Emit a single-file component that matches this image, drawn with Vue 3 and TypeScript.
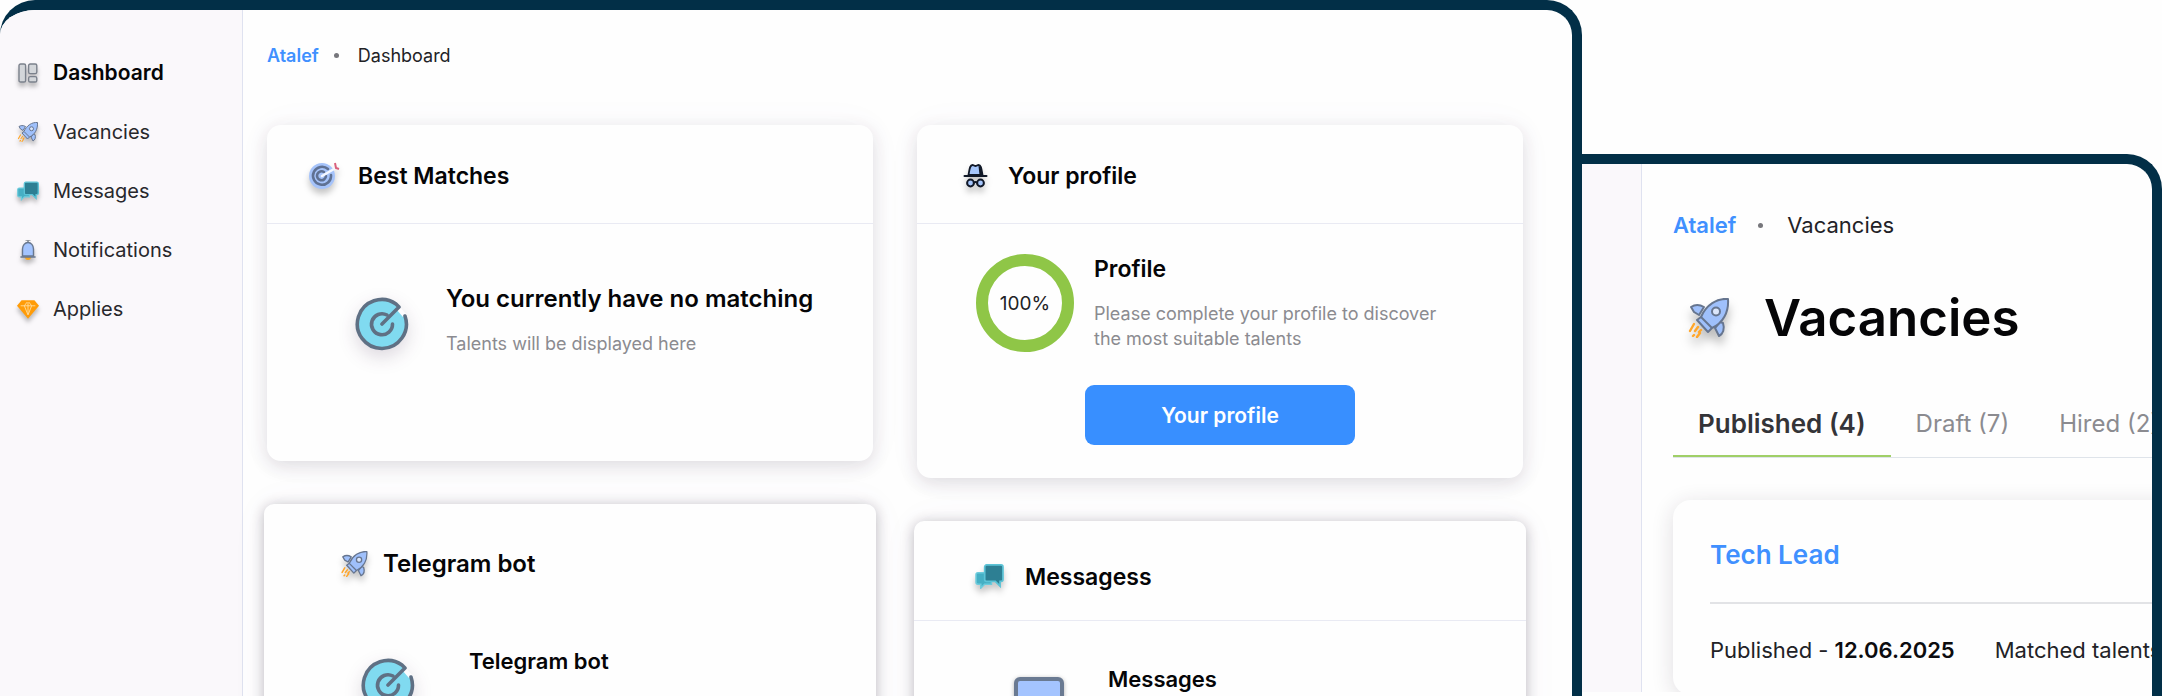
<script setup lang="ts">
interface NavItem {
  label: string
  icon: string
  active?: boolean
}

interface Tab {
  label: string
  active?: boolean
}

const navItems: NavItem[] = [
  { label: 'Dashboard', icon: 'grid', active: true },
  { label: 'Vacancies', icon: 'rocket' },
  { label: 'Messages', icon: 'chat' },
  { label: 'Notifications', icon: 'bell' },
  { label: 'Applies', icon: 'gem' },
]

const tabs: Tab[] = [
  { label: 'Published (4)', active: true },
  { label: 'Draft (7)' },
  { label: 'Hired (2)' },
]

const profilePercent = 100
</script>

<template>
  <svg class="sprite" aria-hidden="true">
    <symbol id="icon-grid" viewBox="0 0 20 20">
      <g fill="#d3d6da" stroke="#7b818c" stroke-width="1.4">
        <rect x="1" y="1" width="6.6" height="18" rx="1.6" />
        <rect x="10.6" y="1" width="8.2" height="9.6" rx="1.6" />
        <rect x="10.6" y="13.6" width="8.2" height="5.4" rx="1.6" />
      </g>
    </symbol>
    <symbol id="icon-rocket" viewBox="0 0 40 40">
      <g fill="#9fc0fb" stroke="#66758f" stroke-width="2" stroke-linejoin="round">
        <path d="M15 9C10 6 5 7 2 9l3 5 5 3z" />
        <path d="M26 30l4 8c4-2 6-7 4-13l-3-1z" />
        <path d="M39 1C28 0 17 7 12 19l-4 3 11 12 4-4C34 25 40 14 39 1z" />
        <path d="M12 19l11 11" fill="none" />
        <circle cx="27" cy="13.5" r="4" fill="#dbe6fb" />
      </g>
      <g fill="none" stroke="#ffa62b" stroke-width="2.4" stroke-linecap="round">
        <path d="M5 26l-4 7M9 29l-3 4M12 32l-2 2M11 35l-3 4M5 37l-1 1" />
      </g>
    </symbol>
    <symbol id="icon-chat" viewBox="0 0 30 26">
      <path d="M3 9h14v12h-7l-4 4v-4H3a2 2 0 0 1-2-2v-8a2 2 0 0 1 2-2z" fill="#45afc4" stroke="#6ccbdc" stroke-width="1.6" />
      <path d="M12 1h15a2 2 0 0 1 2 2v13a2 2 0 0 1-2 2h-1v5l-5-5h-9a2 2 0 0 1-2-2V3a2 2 0 0 1 2-2z" fill="#2d7f93" stroke="#5cc3d6" stroke-width="1.8" />
    </symbol>
    <symbol id="icon-bell" viewBox="0 0 20 20">
      <path d="M7 17h6a3 3 0 0 1-6 0z" fill="#f5a524" />
      <path d="M10 0v3M7.500 0h5" stroke="#8b9098" stroke-width="1.6" fill="none" />
      <path d="M4.500 16V9a5.500 6.500 0 0 1 11 0v7z" fill="#a3c4ff" stroke="#68778f" stroke-width="1.4" />
      <path d="M3 17h14" stroke="#68778f" stroke-width="1.6" stroke-linecap="round" />
    </symbol>
    <symbol id="icon-gem" viewBox="0 0 24 21">
      <path d="M5 1h14l5 6-12 14L0 7z" fill="#ff9c08" />
      <path d="M4 7h16M8 7l4 10 4-10M8 7l3-4M16 7l-3-4M12 3v13" fill="none" stroke="#ffdc9c" stroke-width="1" />
    </symbol>
    <symbol id="icon-target" viewBox="0 0 33 30">
      <circle cx="13" cy="15" r="13" fill="#a5c3fa" />
      <g fill="none" stroke="#5f7193" stroke-width="2.6" stroke-linecap="round">
        <path d="M19 8a9 9 0 1 0 3 6" />
        <path d="M15 11a4.500 4.500 0 1 0 2 4" />
      </g>
      <path d="M13 15l12-7" stroke="#f4f7ff" stroke-width="2.6" stroke-linecap="round" />
      <path d="M26 2l1 5 3 1" fill="none" stroke="#d9607c" stroke-width="2" />
    </symbol>
    <symbol id="icon-hat" viewBox="0 0 24 24">
      <path d="M5 11C6 6 6 1 9 1c1 0 2 1 3 1s2-1 3-1c3 0 3 5 4 10z" fill="#a6c6fb" stroke="#111827" stroke-width="1.8" />
      <path d="M15 2c3 1 3 5 4 9h-3z" fill="#111827" />
      <path d="M1 12h22" stroke="#111827" stroke-width="2" stroke-linecap="round" />
      <g fill="#a6c6fb" stroke="#111827" stroke-width="2">
        <circle cx="7" cy="19" r="3.4" />
        <circle cx="17" cy="19" r="3.4" />
      </g>
      <path d="M10 19q2-2 4 0" fill="none" stroke="#111827" stroke-width="1.8" />
    </symbol>
    <symbol id="icon-goal" viewBox="0 0 60 60">
      <circle cx="30" cy="33" r="24" fill="#80daf0" />
      <path d="M47 15l8 9-4 2-7-8z" fill="#fdfcfe" />
      <g fill="none" stroke="#5f7084" stroke-width="3.6" stroke-linecap="round" stroke-linejoin="round">
        <path d="M53 25A24.500 24.500 0 1 1 44 13L47 16 30 33" />
        <path d="M35 24a10.500 10.500 0 1 0 5.500 9" />
      </g>
    </symbol>
    <symbol id="icon-monitor" viewBox="0 0 60 60">
      <rect x="7" y="9" width="46" height="42" rx="4" fill="#a4c4ff" stroke="#6a7a92" stroke-width="4" />
    </symbol>
  </svg>

  <div class="stage">
    <section class="window window-dashboard">
      <nav class="sidebar" aria-label="Main">
        <a
          v-for="item in navItems"
          :key="item.label"
          href="#"
          class="nav-link"
          :class="{ active: item.active }"
        >
          <svg class="nav-icon" aria-hidden="true"><use :href="`#icon-${item.icon}`" /></svg>
          <span>{{ item.label }}</span>
        </a>
      </nav>

      <main class="content">
        <div class="crumbs">
          <a href="#">Atalef</a>
          <i class="dot"></i>
          <span>Dashboard</span>
        </div>

        <div class="columns">
          <div class="column">
            <article class="card card-matches">
              <header class="card-head">
                <svg class="head-icon" aria-hidden="true"><use href="#icon-target" /></svg>
                <h2>Best Matches</h2>
              </header>
              <div class="card-body">
                <svg class="big-icon" aria-hidden="true"><use href="#icon-goal" /></svg>
                <div class="card-text">
                  <h3>You currently have no matching</h3>
                  <p>Talents will be displayed here</p>
                </div>
              </div>
            </article>

            <article class="card card-lower card-telegram">
              <header class="card-head">
                <svg class="head-icon" aria-hidden="true"><use href="#icon-rocket" /></svg>
                <h2>Telegram bot</h2>
              </header>
              <div class="card-body">
                <svg class="big-icon" aria-hidden="true"><use href="#icon-goal" /></svg>
                <div class="card-text"><h3>Telegram bot</h3></div>
              </div>
            </article>
          </div>

          <div class="column">
            <article class="card card-profile">
              <header class="card-head">
                <svg class="head-icon hat" aria-hidden="true"><use href="#icon-hat" /></svg>
                <h2>Your profile</h2>
              </header>
              <div class="card-body">
                <div class="ring">{{ profilePercent }}%</div>
                <div class="card-text">
                  <h3>Profile</h3>
                  <p>Please complete your profile to discover<br />the most suitable talents</p>
                </div>
              </div>
              <button type="button" class="primary">Your profile</button>
            </article>

            <article class="card card-lower card-messages">
              <header class="card-head">
                <svg class="head-icon" aria-hidden="true"><use href="#icon-chat" /></svg>
                <h2>Messagess</h2>
              </header>
              <div class="card-body">
                <svg class="big-icon crisp" aria-hidden="true"><use href="#icon-monitor" /></svg>
                <div class="card-text"><h3>Messages</h3></div>
              </div>
            </article>
          </div>
        </div>
      </main>
    </section>

    <section class="window window-vacancies">
      <div class="rail"></div>
      <div class="vacancies">
        <div class="crumbs large">
          <a href="#">Atalef</a>
          <i class="dot"></i>
          <span>Vacancies</span>
        </div>
        <div class="page-title">
          <svg aria-hidden="true"><use href="#icon-rocket" /></svg>
          <h1>Vacancies</h1>
        </div>
        <div class="tabs" role="tablist">
          <button
            v-for="tab in tabs"
            :key="tab.label"
            type="button"
            role="tab"
            :aria-selected="tab.active === true"
            class="tab"
            :class="{ active: tab.active }"
          >
            {{ tab.label }}
          </button>
        </div>
        <article class="job">
          <h2><a href="#">Tech Lead</a></h2>
          <div class="job-facts">
            <span>Published - <strong>12.06.2025</strong></span>
            <span>Matched talents</span>
          </div>
        </article>
      </div>
    </section>
  </div>
</template>

<style>
body {
  margin: 0;
  background: #fefefe;
}
</style>

<style scoped>
* {
  box-sizing: border-box;
}

.sprite {
  position: absolute;
  width: 0;
  height: 0;
}

h1,
h2,
h3,
p {
  margin: 0;
}

h1,
h2,
h3 {
  font-weight: 600;
  color: #050507;
}

a {
  text-decoration: none;
}

button {
  font-family: inherit;
  border: 0;
  cursor: pointer;
}

.stage {
  display: grid;
  grid-template-columns: minmax(0, 1582fr) minmax(0, 580fr);
  height: 100vh;
  overflow: hidden;
  font-family: Inter, "Liberation Sans", sans-serif;
  color: #222226;
  white-space: nowrap;
}

.window {
  display: flex;
  min-height: 0;
  overflow: hidden;
  border: 0 solid #022f47;
  border-width: 10px 10px 0 0;
  background: #fefefe;
}

.window-dashboard {
  border-radius: 35px 35px 0 0;
}

.sidebar {
  flex: 0 0 243px;
  padding: 33px 0 0 17px;
  border-right: 1px solid #dfe2f0;
  background: #faf8fb;
}

.nav-link {
  display: flex;
  align-items: center;
  gap: 14px;
  height: 59px;
  font-size: 20px;
  color: #28282c;
}

.nav-link.active {
  font-size: 21px;
  font-weight: 600;
  color: #050507;
}

.nav-icon {
  width: 22px;
  height: 20px;
  overflow: visible;
  filter: drop-shadow(0 4px 2px rgba(0, 0, 0, 0.25));
}

.content {
  flex: 1;
  min-width: 0;
  padding: 30px 49px 0 24px;
}

.crumbs {
  display: flex;
  align-items: center;
  height: 30px;
  font-size: 18px;
}

.crumbs a {
  font-weight: 600;
  color: #4090ff;
}

.dot {
  width: 5px;
  height: 5px;
  margin: 0 19px 0 15px;
  border-radius: 50%;
  background: #77777c;
}

.columns {
  display: flex;
  gap: 44px;
  margin-top: 55px;
}

.column {
  display: flex;
  flex: 1 1 0;
  flex-direction: column;
  gap: 43px;
  min-width: 0;
}

.card {
  border-radius: 14px;
  background: #fefefe;
  box-shadow: 0 5px 18px rgba(40, 30, 50, 0.14), 0 0 40px rgba(120, 80, 180, 0.03);
}

.card-head {
  display: flex;
  align-items: center;
  gap: 16px;
  height: 99px;
  padding: 4px 42px 0;
  border-bottom: 1px solid #e9eaf3;
}

.card-head h2,
.card-text h3 {
  font-size: 23px;
  line-height: 28px;
}

.head-icon {
  width: 33px;
  height: 30px;
  overflow: visible;
  filter: drop-shadow(0 5px 3px rgba(0, 0, 0, 0.22));
}

.head-icon.hat {
  height: 24px;
}

.card-body {
  display: flex;
  align-items: center;
}

.big-icon {
  flex: none;
  width: 60px;
  height: 60px;
  filter: drop-shadow(0 7px 9px rgba(50, 20, 60, 0.16));
}

.big-icon.crisp {
  filter: drop-shadow(0 1px 2px rgba(0, 0, 0, 0.3));
}

.card-text {
  min-height: 70px;
}

.card-text p {
  margin-top: 18px;
  font-size: 18px;
  line-height: 25px;
  color: #8b8b90;
}

.card-matches {
  min-height: 336px;
}

.card-matches .card-body {
  gap: 34px;
  padding: 61px 0 0 85px;
}

.card-matches .card-text h3 {
  font-size: 24px;
}

.card-profile {
  padding-bottom: 33px;
}

.card-profile .card-body {
  gap: 20px;
  padding: 30px 0 0 59px;
}

.ring {
  display: grid;
  place-items: center;
  flex: none;
  width: 98px;
  height: 98px;
  border: 12px solid #8fc647;
  border-radius: 50%;
  font-size: 19px;
}

.primary {
  display: block;
  width: 270px;
  height: 60px;
  margin: 33px auto 0;
  border-radius: 9px;
  background: #388fff;
  color: #fff;
  font-size: 21px;
  font-weight: 600;
}

.card-lower {
  min-height: 340px;
  margin: 0 -3px;
  border-radius: 10px;
  box-shadow: 0 2px 14px rgba(20, 15, 30, 0.28), 0 0 40px rgba(120, 80, 180, 0.04);
}

.card-telegram .card-head {
  gap: 12px;
  height: 119px;
  padding: 0 74px;
  border-bottom: 0;
}

.card-telegram .card-head h2 {
  font-size: 24px;
}

.card-telegram .head-icon {
  height: 26px;
}

.card-telegram .card-body {
  gap: 51px;
  padding: 24px 0 0 94px;
}

.card-messages .card-head {
  gap: 19px;
  height: 100px;
  padding: 12px 59px 0;
}

.card-messages .head-icon {
  height: 25px;
}

.card-messages .card-body {
  gap: 39px;
  padding: 44px 0 0 95px;
}

.card-lower .card-text h3 {
  font-size: 22px;
}

.window-vacancies {
  margin-top: 154px;
  padding-bottom: 4px;
  border-top-right-radius: 35px;
}

.rail {
  flex: 0 0 60px;
  border-right: 1px solid #dfe2f0;
  background: #faf8fb;
}

.vacancies {
  flex: 1;
  min-width: 0;
  padding: 46px 0 0 31px;
  overflow: hidden;
}

.crumbs.large {
  font-size: 22px;
}

.crumbs.large .dot {
  margin: 0 24px 0 22px;
}

.page-title {
  display: flex;
  align-items: center;
  gap: 34px;
  height: 60px;
  margin-top: 48px;
  padding-left: 15px;
}

.page-title svg {
  width: 42px;
  height: 40px;
  overflow: visible;
  filter: drop-shadow(0 8px 5px rgba(0, 0, 0, 0.25));
}

.page-title h1 {
  font-size: 51px;
  line-height: 60px;
}

.tabs {
  display: flex;
  margin-top: 61px;
  border-bottom: 1px solid #dfe4ea;
}

.tab {
  flex: none;
  padding: 0 25px 16px;
  border-bottom: 2px solid transparent;
  background: none;
  color: #8b8b90;
  font-size: 24px;
  line-height: 30px;
}

.tab.active {
  border-color: #a0cf67;
  color: #343438;
  font-size: 26px;
  font-weight: 600;
}

.job {
  margin: 42px -40px 0 0;
  padding: 40px 37px 30px;
  border-radius: 18px;
  background: #fefefe;
  box-shadow: 0 4px 22px rgba(40, 30, 50, 0.14);
}

.job h2 {
  padding-bottom: 32px;
  border-bottom: 2px solid #e2e3e6;
  font-size: 26px;
  line-height: 30px;
}

.job h2 a {
  color: #4090ff;
}

.job-facts {
  display: flex;
  gap: 40px;
  margin-top: 31px;
  font-size: 22px;
  line-height: 30px;
}

.job-facts strong {
  color: #0c0c0f;
  font-weight: 600;
}
</style>
